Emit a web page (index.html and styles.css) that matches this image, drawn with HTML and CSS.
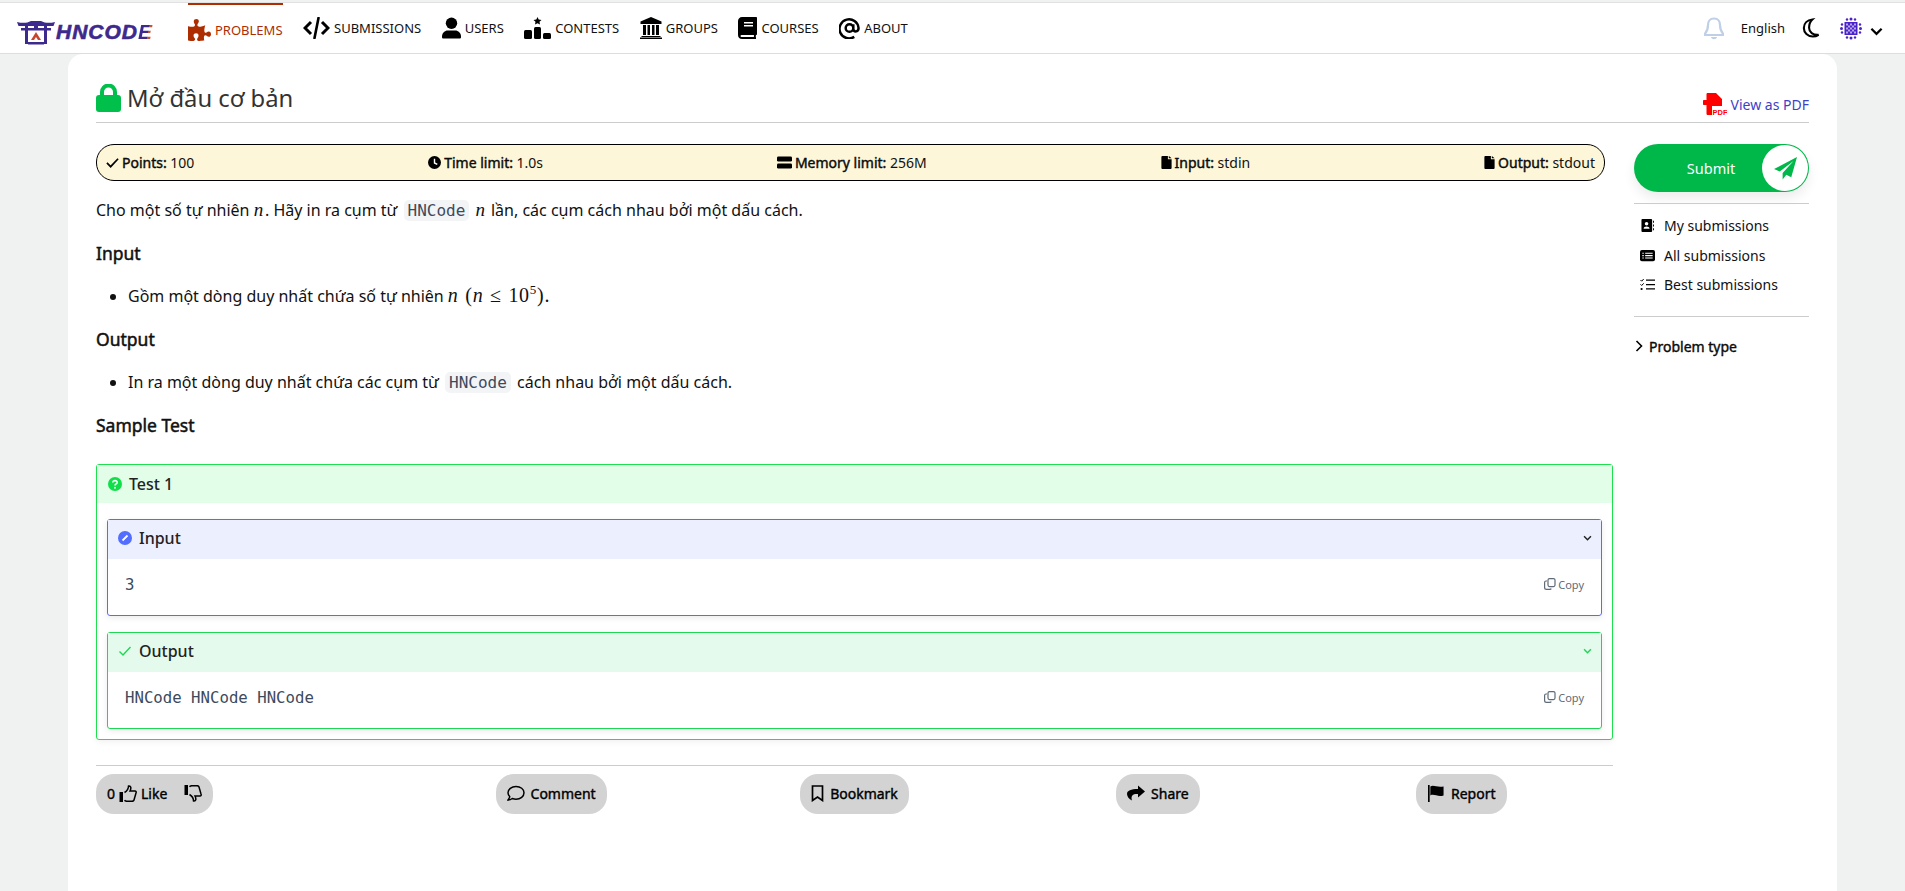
FILE: index.html
```html
<!DOCTYPE html>
<html lang="vi">
<head>
    <meta charset="UTF-8">
    <meta name="viewport" content="width=device-width, initial-scale=1.0">
    <title>Mở đầu cơ bản - HNCode</title>
    <link rel="stylesheet" href="styles.css">
</head>
<body>
    <nav class="navbar">
        <a class="logo">
            <svg class="logo-gate" viewBox="0 0 40 26">
                <path d="M1 3c6 1.500 10 1 14-1h10c4 2 8 2.500 14 1l-1.500 4H2.500z" fill="#3d2a8c"/>
                <path d="M5 9h30v2.500H5z" fill="#3d2a8c"/>
                <path d="M9 7h3v18H9zM28 7h3v18h-3zM18 2h4v7h-4z" fill="#3d2a8c"/>
                <path d="M12 23h16v2.500H12z" fill="#3d2a8c"/>
                <path d="M20 13l5 8h-3l-2-3-2 3h-3z" fill="#c8452d"/>
            </svg>
            <span class="logo-text">HNCOD<span class="logo-e">E</span></span>
        </a>
        <ul class="nav-list">
            <li class="nav-item active">
                <svg class="ic-puzzle" viewBox="0 0 576 512" preserveAspectRatio="none"><path d="M519.442 288.651c-41.519 0-59.5 31.593-82.058 31.593C377.409 320.244 432 144 432 144s-196.288 80-196.288-3.297c0-35.827 36.288-46.25 36.288-85.985C272 19.216 243.885 0 210.539 0c-34.654 0-66.366 18.891-66.366 56.346 0 41.364 31.711 59.277 31.711 81.75C175.885 207.719 0 166.758 0 166.758v333.237s178.635 41.047 178.635-28.662c0-22.473-40-40.107-40-81.471 0-37.456 29.25-56.346 63.577-56.346 33.673 0 61.788 19.216 61.788 54.717 0 39.735-36.288 50.158-36.288 85.985 0 60.803 129.675 25.73 181.23 25.73 0 0-34.725-120.101 25.827-120.101 35.962 0 46.423 36.152 86.308 36.152C556.712 416 576 387.99 576 354.443c0-34.199-18.962-65.792-56.558-65.792z"/></svg>
                <span>PROBLEMS</span>
            </li>
            <li class="nav-item">
                <svg class="ic-code" viewBox="0 0 27 22"><path d="M8 5l-6 6 6 6M19 5l6 6-6 6" fill="none" stroke="#000" stroke-width="3"/><path d="M15.500 1l-4 20" stroke="#000" stroke-width="2.600" stroke-linecap="round"/></svg>
                <span>SUBMISSIONS</span>
            </li>
            <li class="nav-item">
                <svg class="ic-user" viewBox="0 0 20 22"><circle cx="10" cy="6" r="6"/><path d="M1 22c-1 0-1-1-1-2 0-4 3-6.500 6-6.500h8c3 0 6 2.500 6 6.500 0 1 0 2-1 2z"/></svg>
                <span>USERS</span>
            </li>
            <li class="nav-item">
                <svg class="ic-podium" viewBox="0 0 27 22"><path d="M13.500 0l1.200 2.500 2.800.4-2 1.900.5 2.700-2.500-1.300L11 7.500l.5-2.700-2-1.900 2.800-.4z"/><rect x="0" y="13" width="8" height="9" rx="1.500"/><rect x="10" y="10" width="7" height="12" rx="1.500"/><rect x="19" y="16" width="8" height="6" rx="1.500"/></svg>
                <span>CONTESTS</span>
            </li>
            <li class="nav-item">
                <svg class="ic-bank" viewBox="0 0 22 22"><path d="M11 0L.5 4.500V7h21V4.500z"/><path d="M3 8h3v10H3zM7.500 8h2.500v10H7.500zM12 8h2.500v10H12zM16 8h3v10h-3zM1.500 19h19v1H1.500zM0 20.500h22V22H0z"/></svg>
                <span>GROUPS</span>
            </li>
            <li class="nav-item">
                <svg class="ic-book" viewBox="0 0 19 22"><path d="M4 0h14c.6 0 1 .4 1 1v16c0 .6-.4 1-1 1-.3 1-.3 2 0 2.500v1.500H4c-2.200 0-4-1.500-4-4V4c0-2.200 1.800-4 4-4z"/><path d="M6 5h9v1.500H6zM6 8h9v1.500H6zM3.500 18h12.500c-.2 1-.2 1.500 0 2H3.500c-1.300 0-1.300-2 0-2z" fill="#fff"/></svg>
                <span>COURSES</span>
            </li>
            <li class="nav-item">
                <svg class="ic-at" viewBox="0 0 22 22"><path d="M16 20.300A10 10 0 1 1 20.500 11c0 4-4.500 5-5.500 1.500V7m0 4a4 4 0 1 1-8 0 4 4 0 0 1 8 0z" fill="none" stroke="#000" stroke-width="2.600"/></svg>
                <span>ABOUT</span>
            </li>
        </ul>
        <div class="nav-right">
            <svg class="ic-bell" viewBox="0 0 20 23"><path d="M10 1.500c-4 0-6 3-6 6.500 0 5-1.500 7-3 8.800V18h18v-1.200c-1.500-1.800-3-3.800-3-8.800 0-3.500-2-6.500-6-6.500z" fill="none" stroke="#c0cfe8" stroke-width="2.200"/><path d="M7 20h6c-.5 3-5.500 3-6 0z" fill="#c0cfe8"/></svg>
            <span class="lang">English</span>
            <svg class="ic-moon" viewBox="0 0 20 21"><path d="M12 1.500C6.500 2 3 5.500 3 10.500S7 19.500 12.500 19.500c2.500 0 4.500-.8 6-1.800-6 .5-10-3-10-7.500 0-3.500 1-6.500 3.500-8.700z" fill="none" stroke="#000" stroke-width="2.200"/></svg>
            <svg class="ic-avatar" viewBox="0 0 22 22">
                <rect x="4.500" y="4.500" width="13" height="13" fill="#4a22c8"/>
                <path d="M6 6h2v2H6zM10 6h2v2h-2zM14 6h2v2h-2zM8 8h2v2H8zM12 8h2v2h-2zM6 10h2v2H6zM10 10h2v2h-2zM14 10h2v2h-2zM8 12h2v2H8zM12 12h2v2h-2zM6 14h2v2H6zM10 14h2v2h-2zM14 14h2v2h-2z" fill="#b9a8f0"/>
                <g fill="#4a22c8"><circle cx="11" cy="1.500" r="1.500"/><circle cx="7" cy="2" r="1.200"/><circle cx="15" cy="2" r="1.200"/><circle cx="11" cy="20.500" r="1.500"/><circle cx="7" cy="20" r="1.200"/><circle cx="15" cy="20" r="1.200"/><circle cx="1.500" cy="11" r="1.500"/><circle cx="2" cy="7" r="1.200"/><circle cx="2" cy="15" r="1.200"/><circle cx="20.500" cy="11" r="1.500"/><circle cx="20" cy="7" r="1.200"/><circle cx="20" cy="15" r="1.200"/></g>
            </svg>
            <svg class="ic-caret" viewBox="0 0 14 9"><path d="M1.500 1.500L7 7l5.500-5.500" fill="none" stroke="#000" stroke-width="2.400"/></svg>
        </div>
    </nav>

    <main class="page">
        <div class="title-row">
            <h1 class="title">
                <svg class="ic-lock" viewBox="0 0 25 28"><path d="M6 13V8a6.500 6.500 0 0 1 13 0v5" fill="none" stroke="#00c04b" stroke-width="4"/><rect x="0" y="11" width="25" height="17" rx="3" fill="#00c04b"/></svg>
                <span>Mở đầu cơ bản</span>
            </h1>
            <a class="pdf-link">
                <svg class="ic-pdf" viewBox="0 0 24 23"><path d="M4 0h9l6 6v7H9v9H5c-1 0-1.500-.5-1.500-1.500V12H1c-.6 0-1-.4-1-1V8c0-.6.4-1 1-1h2.500V1z" fill="#f00"/><text x="9.500" y="22" class="pdf-mark">PDF</text></svg>
                <span>View as PDF</span>
            </a>
        </div>

        <div class="columns">
            <section class="problem">
                <div class="info-bar">
                    <span class="info"><svg viewBox="0 0 14 12"><path d="M1 6.500L5 10.500 13 2" fill="none" stroke="#000" stroke-width="1.800"/></svg><b>Points:</b> 100</span>
                    <span class="info"><svg viewBox="0 0 14 14"><circle cx="7" cy="7" r="7"/><path d="M7 3v4.500l3 1.500" fill="none" stroke="#fff" stroke-width="1.500"/></svg><b>Time limit:</b> 1.0s</span>
                    <span class="info"><svg class="ic-wide" viewBox="0 0 16 13"><rect width="16" height="5.500" rx="1.500"/><rect y="7.500" width="16" height="5.500" rx="1.500"/></svg><b>Memory limit:</b> 256M</span>
                    <span class="info"><svg class="ic-file" viewBox="0 0 11 14"><path d="M1 0h6v3.500h4V13c0 .6-.4 1-1 1H1c-.6 0-1-.4-1-1V1c0-.6.4-1 1-1zM8 0l3 2.500H8z"/></svg><b>Input:</b> stdin</span>
                    <span class="info"><svg class="ic-file" viewBox="0 0 11 14"><path d="M1 0h6v3.500h4V13c0 .6-.4 1-1 1H1c-.6 0-1-.4-1-1V1c0-.6.4-1 1-1zM8 0l3 2.500H8z"/></svg><b>Output:</b> stdout</span>
                </div>

                <div class="content">
                    <p>Cho một số tự nhiên <i class="math">n</i>. Hãy in ra cụm từ <code>HNCode</code> <i class="math">n</i> lần, các cụm cách nhau bởi một dấu cách.</p>
                    <h4>Input</h4>
                    <ul>
                        <li>Gồm một dòng duy nhất chứa số tự nhiên <span class="math-line"><i>n</i> (<i>n</i> ≤ 10<sup>5</sup>).</span></li>
                    </ul>
                    <h4>Output</h4>
                    <ul>
                        <li>In ra một dòng duy nhất chứa các cụm từ <code>HNCode</code> cách nhau bởi một dấu cách.</li>
                    </ul>
                    <h4>Sample Test</h4>
                </div>

                <div class="test-box">
                    <div class="test-head">
                        <svg class="ic-help" viewBox="0 0 14 14"><circle cx="7" cy="7" r="7" fill="#0fe04a"/><path d="M4.800 5.500C5 3 9.200 3 9.200 5.400 9.200 7 7 6.800 7 8.500" fill="none" stroke="#fff" stroke-width="1.600"/><circle cx="7" cy="10.700" r="1" fill="#fff"/></svg>
                        <span>Test 1</span>
                    </div>
                    <div class="test-body">
                        <div class="io-box io-input">
                            <div class="io-head">
                                <svg class="ic-help" viewBox="0 0 14 14"><circle cx="7" cy="7" r="7" fill="#536dfe"/><path d="M4.500 9.500l5-5" stroke="#fff" stroke-width="1.800"/></svg>
                                <span class="io-title">Input</span>
                                <svg class="ic-chev" viewBox="0 0 10 7"><path d="M1 1.500l4 4 4-4" fill="none" stroke="#222" stroke-width="1.700"/></svg>
                            </div>
                            <div class="io-body">
                                <pre>3</pre>
                                <span class="copy"><svg viewBox="0 0 12 12"><rect x="4" y=".6" width="7" height="8" rx="1.500" fill="none" stroke="#5f6b76" stroke-width="1.200"/><path d="M3 3H2C1 3 .6 3.500.6 4.500v5c0 1 .5 1.900 1.900 1.900h3.500c.6 0 1-.3 1.200-.9" fill="none" stroke="#5f6b76" stroke-width="1.200"/></svg>Copy</span>
                            </div>
                        </div>
                        <div class="io-box io-output">
                            <div class="io-head">
                                <svg class="ic-help" viewBox="0 0 14 14"><path d="M1.500 7.500l3.500 3.500 7.500-8" fill="none" stroke="#1fd655" stroke-width="1.400"/></svg>
                                <span class="io-title">Output</span>
                                <svg class="ic-chev" viewBox="0 0 10 7"><path d="M1 1.500l4 4 4-4" fill="none" stroke="#1fd655" stroke-width="1.700"/></svg>
                            </div>
                            <div class="io-body">
                                <pre>HNCode HNCode HNCode</pre>
                                <span class="copy"><svg viewBox="0 0 12 12"><rect x="4" y=".6" width="7" height="8" rx="1.500" fill="none" stroke="#5f6b76" stroke-width="1.200"/><path d="M3 3H2C1 3 .6 3.500.6 4.500v5c0 1 .5 1.900 1.900 1.900h3.500c.6 0 1-.3 1.200-.9" fill="none" stroke="#5f6b76" stroke-width="1.200"/></svg>Copy</span>
                            </div>
                        </div>
                    </div>
                </div>

                <div class="actions">
                    <div class="action-cell first">
                        <span class="pill">0
                            <svg class="ic-thumb" viewBox="0 0 18 17"><rect x=".5" y="7" width="3.500" height="10"/><path d="M5.500 7.500C8 6 9.500 3.500 9.500 1c2.500-.5 3 2 1.500 5h5c1 0 1.500 1 1 2l-2 7c-.3 1-1 1.300-2 1.300H8c-1 0-2-.3-2.500-1" fill="none" stroke="#000" stroke-width="1.500"/></svg>
                            <span>Like</span>
                            <svg class="ic-thumb down" viewBox="0 0 18 17"><rect x=".5" y="7" width="3.500" height="10"/><path d="M5.500 7.500C8 6 9.500 3.500 9.500 1c2.500-.5 3 2 1.500 5h5c1 0 1.500 1 1 2l-2 7c-.3 1-1 1.300-2 1.300H8c-1 0-2-.3-2.500-1" fill="none" stroke="#000" stroke-width="1.500"/></svg>
                        </span>
                    </div>
                    <div class="action-cell">
                        <span class="pill"><svg class="ic-act" viewBox="0 0 18 16"><path d="M9 1C4.500 1 1 3.700 1 7.200c0 1.500.7 2.900 1.800 4-.3 1.300-1 2.400-1.800 3.300 1.700 0 3.300-.7 4.300-1.500 1.100.4 2.400.7 3.700.7 4.500 0 8-2.900 8-6.500S13.500 1 9 1z" fill="none" stroke="#000" stroke-width="1.500"/></svg><span>Comment</span></span>
                    </div>
                    <div class="action-cell">
                        <span class="pill"><svg class="ic-act narrow" viewBox="0 0 13 17"><path d="M1.500 1h10v14.500l-5-3.500-5 3.500z" fill="none" stroke="#000" stroke-width="1.700"/></svg><span>Bookmark</span></span>
                    </div>
                    <div class="action-cell">
                        <span class="pill"><svg class="ic-act" viewBox="0 0 18 16"><path d="M11 0l7 6-7 6V8.500c-5-.3-7.500 1.500-6 6.500-3-1.500-5-4-5-6.500C0 5 4 3.500 11 3.500z"/></svg><span>Share</span></span>
                    </div>
                    <div class="action-cell">
                        <span class="pill"><svg class="ic-act" viewBox="0 0 17 18"><path d="M0 0h1.800v18H0z"/><path d="M2.500 1.500c4-2 7 1.500 14 0V11c-6 2-10-2-14 0z"/></svg><span>Report</span></span>
                    </div>
                </div>
            </section>

            <aside class="sidebar">
                <a class="submit-btn">
                    <span class="submit-label">Submit</span>
                    <span class="submit-circle"><svg viewBox="0 0 20 20"><path d="M20 0L0 10.500l5 2.200L17 3.500 7.500 14v5.500l3.200-4 4.300 2z" fill="#00b74a"/></svg></span>
                </a>
                <ul class="side-links">
                    <li><svg viewBox="0 0 14 14"><path d="M1.500 0H11c.6 0 1 .4 1 1v12c0 .6-.4 1-1 1H1.500c-.6 0-1-.4-1-1V1c0-.6.4-1 1-1z"/><circle cx="6" cy="5.200" r="1.900" fill="#fff"/><path d="M2.800 10.500c0-3.200 6.400-3.200 6.400 0z" fill="#fff"/><path d="M13 2h1v2h-1zM13 6h1v2h-1zM13 10h1v2h-1z"/></svg>My submissions</li>
                    <li><svg viewBox="0 0 16 12"><rect width="16" height="12" rx="2"/><path d="M2.500 3h1.500v1.200H2.500zM5.500 3h8v1.200h-8zM2.500 5.500h1.500v1.200H2.500zM5.500 5.500h8v1.200h-8zM2.500 8h1.500v1.200H2.500zM5.500 8h8v1.200h-8z" fill="#fff"/></svg>All submissions</li>
                    <li><svg viewBox="0 0 15 12"><path d="M.5 1.500l1.200 1.200L3.700.5M.5 5.800l1.200 1.200 2-2.200" fill="none" stroke="#000" stroke-width="1"/><circle cx="1.600" cy="10.500" r="1.100"/><path d="M6 1h9v1.300H6zM6 5.400h9v1.300H6zM6 9.800h9v1.300H6z"/></svg>Best submissions</li>
                </ul>
                <div class="side-toggle">
                    <svg viewBox="0 0 8 12"><path d="M1.500 1l5 5-5 5" fill="none" stroke="#000" stroke-width="1.600"/></svg>
                    <span>Problem type</span>
                </div>
            </aside>
        </div>
    </main>
</body>
</html>
```

FILE: styles.css
```css
* {
    box-sizing: border-box;
}
html, body {
    height: 100%;
}
body {
    margin: 0;
    display: flex;
    flex-direction: column;
    background: #f0f2f1;
    color: #111;
    font-family: "Noto Sans", sans-serif;
    font-size: 16px;
    overflow: hidden;
}
svg {
    display: block;
    flex: none;
}
ul {
    margin: 0;
    padding: 0;
}

/* navbar */
.navbar {
    display: flex;
    align-items: center;
    height: 52px;
    margin-top: 2px;
    padding: 0 22px 0 16px;
    background: #fff;
    border-top: 1px solid #e2e2e2;
    border-bottom: 1px solid #ddd;
    flex: none;
}
.logo {
    display: flex;
    align-items: center;
    width: 172px;
    gap: 0;
    padding-top: 7px;
}
.logo-gate {
    width: 40px;
    height: 26px;
}
.logo-text {
    font-family: "Liberation Sans", sans-serif;
    font-size: 21px;
    font-style: italic;
    font-weight: 700;
    letter-spacing: 1px;
    color: #3d2a8c;
    -webkit-text-stroke: 0.6px #3d2a8c;
}
.logo-e {
    background: linear-gradient(100deg, #3d2a8c 65%, #c8552f 66%);
    -webkit-background-clip: text;
    background-clip: text;
    color: transparent;
    -webkit-text-stroke: 0;
}
.nav-list {
    display: flex;
    gap: 20.500px;
    list-style: none;
    height: 50px;
}
.nav-item {
    display: flex;
    align-items: center;
    gap: 4px;
    font-size: 13px;
    color: #111;
}
.nav-item.active {
    color: #ae2d00;
    fill: #ae2d00;
    border-top: 2px solid #ae2d00;
    padding-top: 2px;
}
.ic-puzzle { width: 23px; height: 22px; }
.ic-code { width: 27px; height: 22px; }
.ic-user { width: 19px; height: 22px; }
.ic-podium { width: 27px; height: 22px; }
.ic-bank { width: 22px; height: 22px; }
.ic-book { width: 19px; height: 22px; }
.ic-at { width: 21px; height: 22px; }
.nav-right {
    display: flex;
    align-items: center;
    margin-left: auto;
}
.ic-bell { width: 20px; height: 23px; margin-right: 17px; }
.lang { font-size: 13px; margin-right: 16px; }
.ic-moon { width: 19px; height: 20px; margin-right: 20px; }
.ic-avatar { width: 22px; height: 23px; margin-right: 8px; }
.ic-caret { width: 13px; height: 9px; margin-top: 6px; }

/* page card */
.page {
    flex: 1;
    width: 1769px;
    margin: 0 auto;
    padding: 24px 28px 0;
    background: #fff;
    border-radius: 15px 15px 0 0;
}
.title-row {
    display: flex;
    justify-content: space-between;
    align-items: flex-end;
    height: 45px;
    padding-bottom: 2px;
    border-bottom: 1px solid #ccc;
}
.title {
    display: flex;
    align-items: center;
    gap: 6px;
    margin: 0 0 6px;
    font-size: 23.800px;
    font-weight: 400;
    line-height: 32px;
    color: #333;
}
.ic-lock {
    width: 25px;
    height: 28px;
}
.pdf-link {
    display: flex;
    align-items: center;
    gap: 4px;
    font-size: 14px;
    color: #3f3fc8;
    margin-bottom: 4px;
}
.ic-pdf {
    width: 24px;
    height: 23px;
}
.pdf-mark {
    font-family: "Liberation Sans", sans-serif;
    font-size: 7.500px;
    font-weight: 700;
    fill: #f00;
}
.columns {
    display: flex;
    gap: 21px;
    padding-top: 21px;
}

/* left column */
.problem {
    width: 1517px;
    flex: none;
}
.info-bar {
    display: flex;
    justify-content: space-between;
    align-items: center;
    width: 1509px;
    height: 37px;
    padding: 0 9px;
    background: #fdf6d9;
    border: 1px solid #000;
    border-radius: 18px;
    font-size: 14px;
}
.info {
    display: flex;
    align-items: center;
    white-space: pre;
}
.info b {
    font-weight: 400;
    -webkit-text-stroke: 0.4px #000;
}
.info svg {
    width: 13px;
    height: 13px;
    margin-right: 3px;
}
.info svg.ic-wide {
    width: 15px;
}
.info svg.ic-file {
    width: 11px;
}
.content {
    font-size: 16px;
    line-height: 24px;
}
.content p {
    margin: 17px 0 0;
}
.content h4 {
    margin: 18.800px 0 0;
    font-size: 17.500px;
    font-weight: 400;
    -webkit-text-stroke: 0.5px #111;
    line-height: 24px;
}
.content ul {
    margin: 19.300px 0 0;
    padding-left: 32px;
}
.math {
    font-family: "Liberation Serif", serif;
    font-size: 19px;
    line-height: 0;
    letter-spacing: 1.800px;
}
.math-line {
    font-family: "Liberation Serif", serif;
    font-size: 20px;
    line-height: 0;
    letter-spacing: 0.700px;
    word-spacing: 1px;
}
.math-line sup {
    font-size: 13px;
    line-height: 0;
}
code {
    display: inline-block;
    margin: 0 2px;
    padding: 0 4px;
    background: #f3f4f6;
    border-radius: 5px;
    color: #3d4a5c;
    font-family: "DejaVu Sans Mono", monospace;
    font-size: 16px;
    line-height: 21px;
}
.test-box {
    margin-top: 27px;
    border: 1px solid #1ee04f;
    border-radius: 3px;
    box-shadow: 0 2px 6px rgba(0, 0, 0, 0.06);
}
.test-head {
    display: flex;
    align-items: center;
    gap: 7px;
    height: 38px;
    padding-left: 11px;
    background: #e2fde8;
}
.test-head span, .io-title {
    font-size: 16px;
    font-weight: 500;
    color: #222;
}
.ic-help {
    width: 14px;
    height: 14px;
}
.test-body {
    display: flex;
    flex-direction: column;
    gap: 16px;
    padding: 16px 10px 10px;
}
.io-box {
    border: 1px solid #536dfe;
    border-radius: 3px;
    box-shadow: 0 2px 6px rgba(0, 0, 0, 0.08);
}
.io-head {
    display: flex;
    align-items: center;
    gap: 7px;
    height: 39px;
    padding: 0 9px 2px 10px;
    background: #ebeffe;
}
.io-title {
    flex: 1;
}
.ic-chev {
    width: 9px;
    height: 6px;
}
.io-output {
    border-color: #1fd655;
}
.io-output .io-head {
    background: #e4faec;
}
.io-body {
    display: flex;
    justify-content: space-between;
    align-items: center;
    height: 56px;
    padding: 0 17px 4px;
}
pre {
    margin: 0;
    color: #3d4a5c;
    font-family: "DejaVu Sans Mono", monospace;
    font-size: 15.700px;
}
.copy {
    display: flex;
    align-items: center;
    gap: 2px;
    margin-bottom: 1px;
    font-size: 11px;
    color: #5f6b76;
}
.copy svg {
    width: 12px;
    height: 12px;
}
.actions {
    display: grid;
    grid-template-columns: repeat(5, 1fr);
    margin-top: 25px;
    padding-top: 8px;
    border-top: 1px solid #ccc;
}
.action-cell {
    display: flex;
    justify-content: center;
}
.action-cell.first {
    justify-content: flex-start;
}
.pill {
    display: inline-flex;
    align-items: center;
    gap: 4px;
    height: 40px;
    padding: 0 11px;
    background: #d3d3d3;
    border-radius: 18px;
    color: #000;
    font-size: 14px;
    -webkit-text-stroke: 0.4px #000;
}
.ic-thumb {
    width: 18px;
    height: 17px;
}
.ic-thumb.down {
    margin-left: 13px;
    transform: scale(1, -1);
}
.ic-act {
    width: 18px;
    height: 17px;
    margin-right: 2px;
}
.ic-act.narrow {
    width: 13px;
}

/* right column */
.sidebar {
    width: 175px;
    flex: none;
}
.submit-btn {
    display: flex;
    align-items: center;
    height: 48px;
    padding: 1px;
    background: #00b74a;
    border-radius: 24px;
    box-shadow: 0 6px 12px rgba(0, 0, 0, 0.08);
}
.submit-label {
    flex: 1;
    text-align: center;
    padding-left: 25px;
    color: #fff;
    font-size: 14.500px;
}
.submit-circle {
    display: flex;
    align-items: center;
    justify-content: center;
    width: 46px;
    height: 46px;
    background: #fff;
    border-radius: 50%;
}
.submit-circle svg {
    width: 23px;
    height: 23px;
}
.side-links {
    list-style: none;
    margin-top: 11px;
    padding: 7px 0 16px 6px;
    border-top: 1px solid #ccc;
    border-bottom: 1px solid #ccc;
    font-size: 14px;
}
.side-links li {
    display: flex;
    align-items: center;
    gap: 9px;
    height: 29.500px;
}
.side-links svg {
    width: 15px;
    height: 13px;
}
.side-toggle {
    display: flex;
    align-items: center;
    gap: 6px;
    padding: 20px 0 0 1px;
    font-size: 14px;
    -webkit-text-stroke: 0.4px #000;
}
.side-toggle svg {
    width: 8px;
    height: 12px;
}
```
